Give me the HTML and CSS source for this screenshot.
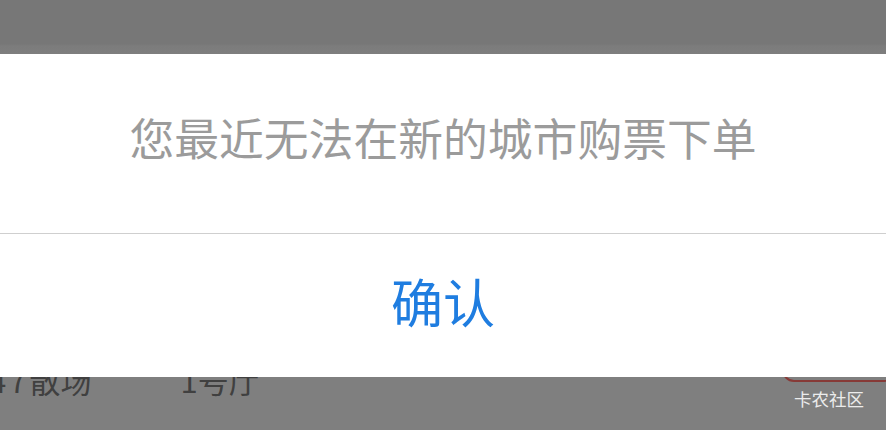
FILE: index.html
```html
<!DOCTYPE html>
<html lang="zh-CN">
<head>
<meta charset="utf-8">
<title>提示</title>
<link rel="stylesheet" href="styles.css">
</head>
<body>
<div class="page">
  <div class="header"></div>
  <div class="content">
    <div class="info-row">
      <div class="info-left">
        <span class="time"><span class="digits">47</span>散场</span>
        <span class="hall">1号厅</span>
      </div>
      <div class="buy-btn"></div>
    </div>
    <div class="watermark">卡农社区</div>
  </div>
</div>
<div class="dialog">
  <div class="dialog-msg">您最近无法在新的城市购票下单</div>
  <div class="dialog-btn">确认</div>
</div>
</body>
</html>
```
FILE: styles.css
```css
html, body {
  margin: 0;
  padding: 0;
}
body {
  width: 886px;
  height: 430px;
  overflow: hidden;
  position: relative;
  background: #7f7f7f;
  font-family: "Noto Sans CJK SC", "Noto Sans", sans-serif;
}
.page {
  display: flex;
  flex-direction: column;
  height: 430px;
}
.header {
  height: 54px;
  background: linear-gradient(to bottom, #777777 0, #777777 44px, #7c7c7c 46px, #7e7e7e 54px);
}
.content {
  flex: 1;
  display: flex;
  flex-direction: column;
  padding-top: 308px;
}
.info-row {
  display: flex;
  justify-content: space-between;
  align-items: flex-start;
  height: 36px;
}
.info-left {
  display: flex;
  margin-left: -11px;
  gap: 89px;
  font-size: 31px;
  line-height: 36px;
  color: #404040;
}
.digits {
  letter-spacing: 3px;
}
.buy-btn {
  width: 110px;
  height: 20px;
  margin-top: -4px;
  margin-right: -10px;
  border: 2px solid #873a37;
  border-radius: 12px;
  background: #7f7f7f;
}
.watermark {
  align-self: flex-end;
  margin-right: 22px;
  margin-top: -9px;
  font-size: 17.5px;
  line-height: 20px;
  color: #ececec;
}
.dialog {
  position: absolute;
  left: 0;
  top: 54px;
  width: 886px;
  height: 323px;
  background: #ffffff;
  display: flex;
  flex-direction: column;
}
.dialog-msg {
  height: 180px;
  display: flex;
  align-items: center;
  justify-content: center;
  font-size: 44.8px;
  color: #9b9b9b;
  border-bottom: 1.5px solid #cfcfcf;
  box-sizing: border-box;
  padding-bottom: 15px;
}
.dialog-btn {
  flex: 1;
  display: flex;
  align-items: center;
  justify-content: center;
  font-size: 52px;
  color: #1f7de0;
  padding-bottom: 10px;
}
```
